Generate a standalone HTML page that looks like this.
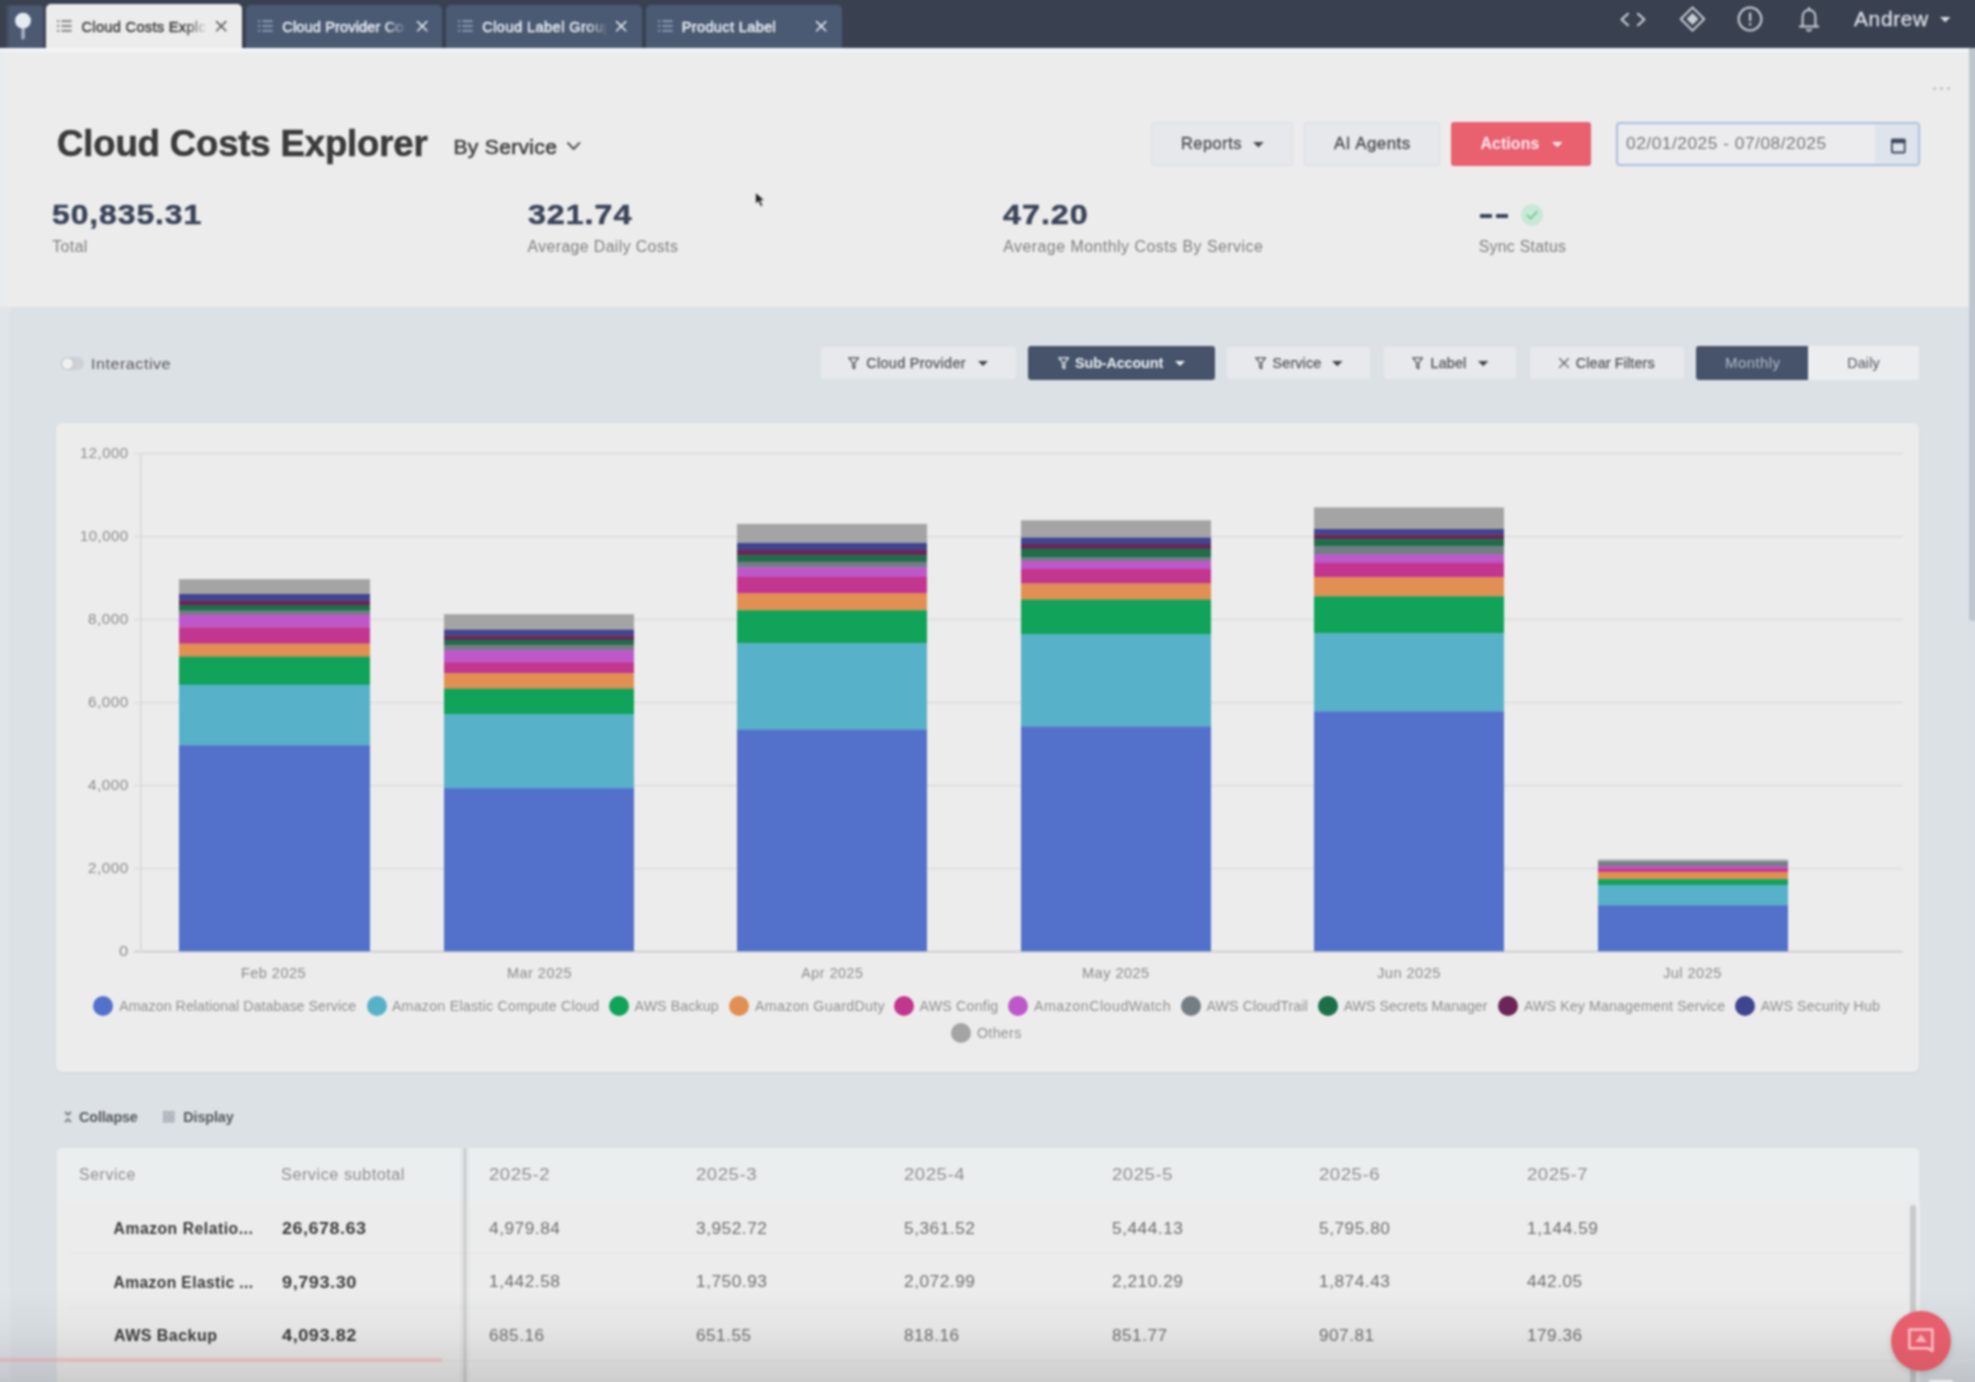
<!DOCTYPE html>
<html><head><meta charset="utf-8"><title>Cloud Costs Explorer</title>
<style>
html,body{margin:0;padding:0;}
body{width:1975px;height:1382px;overflow:hidden;position:relative;background:#dce1e6;font-family:"Liberation Sans",sans-serif;}
.t{position:absolute;white-space:nowrap;line-height:1em;}
.r{position:absolute;}
svg{position:absolute;overflow:visible;}
#bw{position:absolute;left:-20px;top:-20px;width:2015px;height:1422px;filter:blur(1px);}
#in{position:absolute;left:20px;top:20px;width:1975px;height:1382px;}
</style></head><body>
<div id="bw"><div id="in">
<div class="r" style="left:-20.0px;top:-20.0px;width:2015.0px;height:68.0px;background:#394150;"></div>
<div class="r" style="left:6.3px;top:4.8px;width:38.9px;height:43.2px;background:#424d62;border-radius:3px 3px 0 0;"></div>
<div class="r" style="left:9.3px;top:5.6px;width:32.9px;height:42.4px;background:#4c5a71;border-radius:2px 2px 0 0;"></div>
<svg style="left:14.4px;top:12px" width="18" height="28" viewBox="0 0 18 28"><rect x="7.4" y="14" width="3.4" height="13.4" rx="1.4" fill="#aab5c5"/><circle cx="9" cy="8.7" r="7.9" fill="#e6ebf2"/></svg>
<div class="r" style="left:46.0px;top:4.0px;width:196.0px;height:44.0px;background:#ececec;border-radius:5px 5px 0 0;"></div>
<div class="r" style="left:246.0px;top:5.0px;width:196.0px;height:43.0px;background:#4a5a73;border-radius:5px 5px 0 0;"></div>
<div class="r" style="left:446.0px;top:5.0px;width:196.0px;height:43.0px;background:#4a5a73;border-radius:5px 5px 0 0;"></div>
<div class="r" style="left:646.0px;top:5.0px;width:196.0px;height:43.0px;background:#4a5a73;border-radius:5px 5px 0 0;"></div>
<svg style="left:57.4px;top:19.5px" width="15" height="12" viewBox="0 0 15 12"><g fill="#7d7d7d"><rect x="0" y="0.2" width="2.2" height="1.9"/><rect x="4.4" y="0.2" width="10.2" height="1.9"/><rect x="0" y="5" width="2.2" height="1.9"/><rect x="4.4" y="5" width="10.2" height="1.9"/><rect x="0" y="9.8" width="2.2" height="1.9"/><rect x="4.4" y="9.8" width="10.2" height="1.9"/></g></svg>
<div class="r" style="left:81px;top:14px;width:124px;height:26px;overflow:hidden;-webkit-mask-image:linear-gradient(90deg,#000 84%,transparent 102%);mask-image:linear-gradient(90deg,#000 84%,transparent 102%);">
<span class="t" style="left:0.5px;top:6.0px;font-size:14.6px;letter-spacing:0.31px;color:#454545;-webkit-text-stroke:0.55px #454545;">Cloud Costs Explorer</span>
</div>
<svg style="left:216.10000000000002px;top:20.8px" width="10.4" height="10.4" viewBox="0 0 10.4 10.4"><path d="M0.6 0.6 L9.8 9.8 M9.8 0.6 L0.6 9.8" stroke="#5c5c5c" stroke-width="1.6" fill="none" stroke-linecap="round"/></svg>
<svg style="left:257.5px;top:19.5px" width="15" height="12" viewBox="0 0 15 12"><g fill="#8f9db3"><rect x="0" y="0.2" width="2.2" height="1.9"/><rect x="4.4" y="0.2" width="10.2" height="1.9"/><rect x="0" y="5" width="2.2" height="1.9"/><rect x="4.4" y="5" width="10.2" height="1.9"/><rect x="0" y="9.8" width="2.2" height="1.9"/><rect x="4.4" y="9.8" width="10.2" height="1.9"/></g></svg>
<div class="r" style="left:281.5px;top:14px;width:123px;height:26px;overflow:hidden;-webkit-mask-image:linear-gradient(90deg,#000 84%,transparent 102%);mask-image:linear-gradient(90deg,#000 84%,transparent 102%);">
<span class="t" style="left:0.8px;top:6.0px;font-size:14.6px;letter-spacing:0.12px;color:#e4e9f0;-webkit-text-stroke:0.55px #e4e9f0;">Cloud Provider Costs</span>
</div>
<svg style="left:416.8px;top:20.8px" width="10.4" height="10.4" viewBox="0 0 10.4 10.4"><path d="M0.6 0.6 L9.8 9.8 M9.8 0.6 L0.6 9.8" stroke="#e4e9f0" stroke-width="1.6" fill="none" stroke-linecap="round"/></svg>
<svg style="left:457.5px;top:19.5px" width="15" height="12" viewBox="0 0 15 12"><g fill="#8f9db3"><rect x="0" y="0.2" width="2.2" height="1.9"/><rect x="4.4" y="0.2" width="10.2" height="1.9"/><rect x="0" y="5" width="2.2" height="1.9"/><rect x="4.4" y="5" width="10.2" height="1.9"/><rect x="0" y="9.8" width="2.2" height="1.9"/><rect x="4.4" y="9.8" width="10.2" height="1.9"/></g></svg>
<div class="r" style="left:481.5px;top:14px;width:124px;height:26px;overflow:hidden;-webkit-mask-image:linear-gradient(90deg,#000 84%,transparent 102%);mask-image:linear-gradient(90deg,#000 84%,transparent 102%);">
<span class="t" style="left:0.7px;top:6.0px;font-size:14.6px;letter-spacing:0.43px;color:#e4e9f0;-webkit-text-stroke:0.55px #e4e9f0;">Cloud Label Groups</span>
</div>
<svg style="left:615.8px;top:20.8px" width="10.4" height="10.4" viewBox="0 0 10.4 10.4"><path d="M0.6 0.6 L9.8 9.8 M9.8 0.6 L0.6 9.8" stroke="#e4e9f0" stroke-width="1.6" fill="none" stroke-linecap="round"/></svg>
<svg style="left:657.5px;top:19.5px" width="15" height="12" viewBox="0 0 15 12"><g fill="#8f9db3"><rect x="0" y="0.2" width="2.2" height="1.9"/><rect x="4.4" y="0.2" width="10.2" height="1.9"/><rect x="0" y="5" width="2.2" height="1.9"/><rect x="4.4" y="5" width="10.2" height="1.9"/><rect x="0" y="9.8" width="2.2" height="1.9"/><rect x="4.4" y="9.8" width="10.2" height="1.9"/></g></svg>
<span class="t" style="left:681.7px;top:20.0px;font-size:14.6px;letter-spacing:0.34px;color:#e4e9f0;-webkit-text-stroke:0.55px #e4e9f0;">Product Label</span>
<svg style="left:816.3px;top:20.8px" width="10.4" height="10.4" viewBox="0 0 10.4 10.4"><path d="M0.6 0.6 L9.8 9.8 M9.8 0.6 L0.6 9.8" stroke="#e4e9f0" stroke-width="1.6" fill="none" stroke-linecap="round"/></svg>
<svg style="left:1620px;top:13px" width="26" height="13" viewBox="0 0 26 13"><path d="M8 0.8 L1.6 6.5 L8 12.2 M18 0.8 L24.4 6.5 L18 12.2" stroke="#c9ced7" stroke-width="2.2" fill="none" stroke-linecap="round" stroke-linejoin="round"/></svg>
<svg style="left:1678.5px;top:6px" width="27" height="26" viewBox="0 0 27 26"><path d="M13.5 1.4 L25.2 13 L13.5 24.6 L1.8 13 Z" stroke="#c9ced7" stroke-width="2" fill="none" stroke-linejoin="round"/><path d="M13.5 7 L19.5 13 L13.5 19 L7.5 13 Z" fill="#c9ced7"/></svg>
<svg style="left:1737px;top:6px" width="26" height="26" viewBox="0 0 26 26"><circle cx="13" cy="13" r="11.4" stroke="#c9ced7" stroke-width="2" fill="none"/><rect x="12" y="6.6" width="2.2" height="8.4" fill="#c9ced7"/><rect x="12" y="17" width="2.2" height="2.4" fill="#c9ced7"/></svg>
<svg style="left:1798.5px;top:6.5px" width="20" height="25" viewBox="0 0 20 25"><path d="M10 1 V3 M3.6 19.2 V10.4 C3.6 5.6 6.4 3 10 3 C13.6 3 16.4 5.6 16.4 10.4 V19.2 M0.8 19.6 H19.2 M8 22.6 C8.6 24 11.4 24 12 22.6" stroke="#c9ced7" stroke-width="2" fill="none" stroke-linecap="round" stroke-linejoin="round"/></svg>
<span class="t" style="left:1854.0px;top:10.0px;font-size:19.6px;letter-spacing:0.59px;color:#dadee6;transform-origin:0 50%;transform:scaleX(1.0691);-webkit-text-stroke:0.3px #dadee6;">Andrew</span>
<svg style="left:1940px;top:17.4px" width="10.400000000000091" height="5.2000000000000455" viewBox="0 0 10 5"><path d="M0 0 H10 L5 5 Z" fill="#dadee6"/></svg>
<div class="r" style="left:-20.0px;top:48.0px;width:2015.0px;height:258.5px;background:#ececec;"></div>
<div class="r" style="left:-20.0px;top:306.5px;width:2015.0px;height:1095.5px;background:#dce1e6;"></div>
<div class="r" style="left:-20px;top:48px;width:2015px;height:6px;background:linear-gradient(180deg,rgba(246,249,252,.9),rgba(246,249,252,0))"></div>
<div class="r" style="left:-20.0px;top:52.0px;width:25.5px;height:254.5px;background:#e9ecee;"></div>
<div class="r" style="left:-20.0px;top:306.5px;width:30.0px;height:1095.5px;background:#e0e5ea;"></div>
<span class="t" style="left:57.0px;top:125.5px;font-size:36.5px;letter-spacing:-0.13px;color:#3b3b3b;font-weight:bold;-webkit-text-stroke:0.6px #3b3b3b;">Cloud Costs Explorer</span>
<span class="t" style="left:453.5px;top:136.2px;font-size:21px;letter-spacing:0.33px;color:#444;-webkit-text-stroke:0.65px #444;">By Service</span>
<svg style="left:566.8px;top:141.6px" width="13.4" height="8.4" viewBox="0 0 13.4 8.4"><path d="M1 1 L6.7 7 L12.4 1" stroke="#555" stroke-width="2" fill="none" stroke-linecap="round" stroke-linejoin="round"/></svg>
<div class="r" style="left:1932.5px;top:86.5px;width:3.6px;height:3.0px;background:#bdbdbd;border-radius:2px;"></div>
<div class="r" style="left:1939.5px;top:86.5px;width:3.6px;height:3.0px;background:#bdbdbd;border-radius:2px;"></div>
<div class="r" style="left:1946.5px;top:86.5px;width:3.6px;height:3.0px;background:#bdbdbd;border-radius:2px;"></div>
<span class="t" style="left:52.3px;top:201.2px;font-size:27.8px;letter-spacing:0.83px;color:#3a4459;font-weight:bold;transform-origin:0 50%;transform:scaleX(1.1449);-webkit-text-stroke:0.5px #3a4459;">50,835.31</span>
<span class="t" style="left:52.3px;top:239.2px;font-size:15.8px;letter-spacing:0.43px;color:#7d7d7d;">Total</span>
<span class="t" style="left:528.2px;top:201.2px;font-size:27.8px;letter-spacing:0.83px;color:#3a4459;font-weight:bold;transform-origin:0 50%;transform:scaleX(1.1584);-webkit-text-stroke:0.5px #3a4459;">321.74</span>
<span class="t" style="left:527.6px;top:239.2px;font-size:15.8px;letter-spacing:0.41px;color:#7d7d7d;">Average Daily Costs</span>
<span class="t" style="left:1003.4px;top:201.2px;font-size:27.8px;letter-spacing:0.83px;color:#3a4459;font-weight:bold;transform-origin:0 50%;transform:scaleX(1.1635);-webkit-text-stroke:0.5px #3a4459;">47.20</span>
<span class="t" style="left:1003.2px;top:239.2px;font-size:15.8px;letter-spacing:0.54px;color:#7d7d7d;">Average Monthly Costs By Service</span>
<div class="r" style="left:1479.5px;top:213.6px;width:12.5px;height:4.0px;background:#3a4459;"></div>
<div class="r" style="left:1496.0px;top:213.6px;width:12.4px;height:4.0px;background:#3a4459;"></div>
<svg style="left:1520.5px;top:203.5px" width="22" height="22" viewBox="0 0 22 22"><circle cx="11" cy="11" r="11" fill="#c9e8d6"/><path d="M6.4 11.4 L9.8 14.6 L15.8 7.6" stroke="#79c79c" stroke-width="1.8" fill="none" stroke-linecap="round" stroke-linejoin="round"/></svg>
<span class="t" style="left:1478.8px;top:239.2px;font-size:15.8px;letter-spacing:0.28px;color:#7d7d7d;">Sync Status</span>
<div class="r" style="left:1151.0px;top:122.0px;width:142.3px;height:44.0px;background:#e6e8eb;border:1px solid #dcdfe3;box-sizing:border-box;border-radius:3px;"></div>
<span class="t" style="left:1181.0px;top:135.6px;font-size:15.8px;letter-spacing:0.47px;color:#4e4e4e;transform-origin:0 50%;transform:scaleX(1.0394);-webkit-text-stroke:0.35px #4e4e4e;">Reports</span>
<svg style="left:1252.8px;top:142.2px" width="10.799999999999955" height="5.399999999999977" viewBox="0 0 10 5"><path d="M0 0 H10 L5 5 Z" fill="#4a4a4a"/></svg>
<div class="r" style="left:1303.7px;top:122.0px;width:136.3px;height:44.0px;background:#e6e8eb;border:1px solid #dcdfe3;box-sizing:border-box;border-radius:3px;"></div>
<span class="t" style="left:1333.5px;top:135.6px;font-size:15.8px;letter-spacing:0.47px;color:#4e4e4e;transform-origin:0 50%;transform:scaleX(1.0675);-webkit-text-stroke:0.35px #4e4e4e;">AI Agents</span>
<div class="r" style="left:1450.6px;top:122.0px;width:140.4px;height:44.0px;background:#e9606f;border-radius:3px;"></div>
<span class="t" style="left:1480.4px;top:135.6px;font-size:15.8px;letter-spacing:0.16px;color:#fbecee;font-weight:bold;">Actions</span>
<svg style="left:1551.8px;top:142.2px" width="10.600000000000136" height="5.300000000000068" viewBox="0 0 10 5"><path d="M0 0 H10 L5 5 Z" fill="#fbecee"/></svg>
<div class="r" style="left:1616.0px;top:121.5px;width:304.0px;height:44.0px;background:#ececee;border:2px solid #a9c0df;box-sizing:border-box;border-radius:4px;"></div>
<div class="r" style="left:1875.0px;top:123.5px;width:43.0px;height:40.0px;background:#dfe4ec;border-radius:0 2px 2px 0;"></div>
<span class="t" style="left:1625.6px;top:136.2px;font-size:15.6px;letter-spacing:0.47px;color:#767676;transform-origin:0 50%;transform:scaleX(1.1101);">02/01/2025 - 07/08/2025</span>
<svg style="left:1891.2px;top:138px" width="14.6" height="15.4" viewBox="0 0 14.6 15.4"><rect x="0.9" y="1.6" width="12.8" height="12.9" rx="1" fill="none" stroke="#3e4a5d" stroke-width="1.8"/><rect x="0" y="0.7" width="14.6" height="4.6" rx="1" fill="#3e4a5d"/></svg>
<svg style="left:755px;top:192px" width="11" height="16" viewBox="0 0 11 16"><path d="M0.5 0.5 L0.5 12 L3.4 9.4 L5.6 14.6 L7.8 13.6 L5.6 8.6 L9.6 8.4 Z" fill="#222" stroke="#eee" stroke-width="0.7"/></svg>
<div class="r" style="left:61.3px;top:357.4px;width:22.7px;height:12.4px;background:#cdd1d6;border-radius:7px;"></div>
<div class="r" style="left:62.4px;top:358.4px;width:10.4px;height:10.4px;border-radius:50%;background:#eef0f2;box-shadow:0 0 1.5px rgba(0,0,0,.3)"></div>
<span class="t" style="left:90.8px;top:356.0px;font-size:15.2px;letter-spacing:0.46px;color:#585858;transform-origin:0 50%;transform:scaleX(1.0653);">Interactive</span>
<div class="r" style="left:819.8px;top:346.3px;width:197.5px;height:33.5px;background:#e7e9ec;border:1px solid #dde0e4;box-sizing:border-box;border-radius:3px;"></div>
<svg style="left:848.4px;top:357.2px" width="11.4" height="12.6" viewBox="0 0 11.4 12.6"><path d="M0.8 0.8 H10.6 L6.7 5.6 V11.6 L4.7 10.4 V5.6 Z" stroke="#50545a" stroke-width="1.3" fill="none" stroke-linejoin="round"/></svg>
<span class="t" style="left:866.3px;top:355.8px;font-size:14.4px;letter-spacing:0.31px;color:#50545a;-webkit-text-stroke:0.25px #50545a;">Cloud Provider</span>
<svg style="left:977.8px;top:361px" width="10.0" height="5.0" viewBox="0 0 10 5"><path d="M0 0 H10 L5 5 Z" fill="#444"/></svg>
<div class="r" style="left:1028.0px;top:346.3px;width:187.0px;height:33.7px;background:#46536b;border-radius:3px;"></div>
<svg style="left:1057.6px;top:357.2px" width="11.4" height="12.6" viewBox="0 0 11.4 12.6"><path d="M0.8 0.8 H10.6 L6.7 5.6 V11.6 L4.7 10.4 V5.6 Z" stroke="#eef1f5" stroke-width="1.3" fill="none" stroke-linejoin="round"/></svg>
<span class="t" style="left:1075.0px;top:355.8px;font-size:14.4px;letter-spacing:-0.13px;color:#eef1f5;font-weight:bold;">Sub-Account</span>
<svg style="left:1175.4px;top:361px" width="10.0" height="5.0" viewBox="0 0 10 5"><path d="M0 0 H10 L5 5 Z" fill="#eef1f5"/></svg>
<div class="r" style="left:1225.5px;top:346.3px;width:145.9px;height:33.5px;background:#e7e9ec;border:1px solid #dde0e4;box-sizing:border-box;border-radius:3px;"></div>
<svg style="left:1255px;top:357.2px" width="11.4" height="12.6" viewBox="0 0 11.4 12.6"><path d="M0.8 0.8 H10.6 L6.7 5.6 V11.6 L4.7 10.4 V5.6 Z" stroke="#50545a" stroke-width="1.3" fill="none" stroke-linejoin="round"/></svg>
<span class="t" style="left:1272.6px;top:355.8px;font-size:14.4px;letter-spacing:0.11px;color:#50545a;-webkit-text-stroke:0.25px #50545a;">Service</span>
<svg style="left:1332.4px;top:361px" width="10.599999999999909" height="5.2999999999999545" viewBox="0 0 10 5"><path d="M0 0 H10 L5 5 Z" fill="#444"/></svg>
<div class="r" style="left:1382.8px;top:346.3px;width:134.6px;height:33.5px;background:#e7e9ec;border:1px solid #dde0e4;box-sizing:border-box;border-radius:3px;"></div>
<svg style="left:1412.2px;top:357.2px" width="11.4" height="12.6" viewBox="0 0 11.4 12.6"><path d="M0.8 0.8 H10.6 L6.7 5.6 V11.6 L4.7 10.4 V5.6 Z" stroke="#50545a" stroke-width="1.3" fill="none" stroke-linejoin="round"/></svg>
<span class="t" style="left:1430.5px;top:355.8px;font-size:14.4px;letter-spacing:0.15px;color:#50545a;-webkit-text-stroke:0.25px #50545a;">Label</span>
<svg style="left:1478px;top:361px" width="10.400000000000091" height="5.2000000000000455" viewBox="0 0 10 5"><path d="M0 0 H10 L5 5 Z" fill="#444"/></svg>
<div class="r" style="left:1528.7px;top:346.3px;width:155.9px;height:33.5px;background:#e7e9ec;border:1px solid #dde0e4;box-sizing:border-box;border-radius:3px;"></div>
<svg style="left:1559.3px;top:358.4px" width="10.0" height="10.0" viewBox="0 0 10.0 10.0"><path d="M0.6 0.6 L9.4 9.4 M9.4 0.6 L0.6 9.4" stroke="#50545a" stroke-width="1.3" fill="none" stroke-linecap="round"/></svg>
<span class="t" style="left:1575.8px;top:355.8px;font-size:14.4px;letter-spacing:0.11px;color:#50545a;-webkit-text-stroke:0.25px #50545a;">Clear Filters</span>
<div class="r" style="left:1695.9px;top:346.3px;width:112.4px;height:33.7px;background:#46536b;border-radius:3px 0 0 3px;"></div>
<span class="t" style="left:1724.7px;top:356.2px;font-size:14.4px;letter-spacing:0.43px;color:#b3bcc9;transform-origin:0 50%;transform:scaleX(1.0390);">Monthly</span>
<div class="r" style="left:1808.3px;top:346.3px;width:110.4px;height:33.7px;background:#ebedef;border-radius:0 3px 3px 0;"></div>
<span class="t" style="left:1847.2px;top:356.2px;font-size:14.4px;letter-spacing:0.13px;color:#50545a;">Daily</span>
<div class="r" style="left:56.2px;top:423.0px;width:1863.1px;height:648.6px;background:#ececec;border-radius:6px;box-shadow:0 1px 3px rgba(0,0,0,.06);"></div>
<svg style="left:0;top:0" width="1975" height="1100" viewBox="0 0 1975 1100"><rect x="134" y="452.8" width="1769" height="1.6" fill="#dddddd"/><rect x="134" y="535.8000000000001" width="1769" height="1.6" fill="#dddddd"/><rect x="134" y="618.8000000000001" width="1769" height="1.6" fill="#dddddd"/><rect x="134" y="701.8000000000001" width="1769" height="1.6" fill="#dddddd"/><rect x="134" y="784.8000000000001" width="1769" height="1.6" fill="#dddddd"/><rect x="134" y="867.8000000000001" width="1769" height="1.6" fill="#dddddd"/><rect x="134" y="950.8000000000001" width="1769" height="1.6" fill="#c9c9c9"/><rect x="140" y="453" width="1.8" height="499" fill="#dadada"/><rect x="179" y="579.2" width="191" height="15.1" fill="#a4a4a4"/><rect x="179" y="594" width="191" height="6.8" fill="#3f4591"/><rect x="179" y="600.5" width="191" height="4.8" fill="#6b2556"/><rect x="179" y="605" width="191" height="5.9" fill="#1d6f49"/><rect x="179" y="610.6" width="191" height="4.4" fill="#737d84"/><rect x="179" y="614.7" width="191" height="12.9" fill="#be58ca"/><rect x="179" y="627.3" width="191" height="16.6" fill="#c3368f"/><rect x="179" y="643.6" width="191" height="13.3" fill="#e18f52"/><rect x="179" y="656.6" width="191" height="28.4" fill="#10a359"/><rect x="179" y="684.7" width="191" height="60.8" fill="#57b2c9"/><rect x="179" y="745.2" width="191" height="206.1" fill="#5371cb"/><rect x="444" y="614.2" width="190" height="15.8" fill="#a4a4a4"/><rect x="444" y="629.7" width="190" height="6.0" fill="#3f4591"/><rect x="444" y="635.4" width="190" height="4.7" fill="#6b2556"/><rect x="444" y="639.8" width="190" height="5.4" fill="#1d6f49"/><rect x="444" y="644.9" width="190" height="5.3" fill="#737d84"/><rect x="444" y="649.9" width="190" height="12.6" fill="#be58ca"/><rect x="444" y="662.2" width="190" height="11.2" fill="#c3368f"/><rect x="444" y="673.1" width="190" height="15.8" fill="#e18f52"/><rect x="444" y="688.6" width="190" height="26.0" fill="#10a359"/><rect x="444" y="714.3" width="190" height="74.1" fill="#57b2c9"/><rect x="444" y="788.1" width="190" height="163.2" fill="#5371cb"/><rect x="737" y="523.9" width="190" height="19.4" fill="#a4a4a4"/><rect x="737" y="543" width="190" height="6.9" fill="#3f4591"/><rect x="737" y="549.6" width="190" height="5.8" fill="#6b2556"/><rect x="737" y="555.1" width="190" height="6.9" fill="#1d6f49"/><rect x="737" y="561.7" width="190" height="5.9" fill="#737d84"/><rect x="737" y="567.3" width="190" height="9.8" fill="#be58ca"/><rect x="737" y="576.8" width="190" height="16.8" fill="#c3368f"/><rect x="737" y="593.3" width="190" height="17.3" fill="#e18f52"/><rect x="737" y="610.3" width="190" height="33.3" fill="#10a359"/><rect x="737" y="643.3" width="190" height="86.6" fill="#57b2c9"/><rect x="737" y="729.6" width="190" height="221.7" fill="#5371cb"/><rect x="1021" y="520.3" width="190" height="17.6" fill="#a4a4a4"/><rect x="1021" y="537.6" width="190" height="6.7" fill="#3f4591"/><rect x="1021" y="544" width="190" height="5.1" fill="#6b2556"/><rect x="1021" y="548.8" width="190" height="8.5" fill="#1d6f49"/><rect x="1021" y="557" width="190" height="4.2" fill="#737d84"/><rect x="1021" y="560.9" width="190" height="8.3" fill="#be58ca"/><rect x="1021" y="568.9" width="190" height="14.9" fill="#c3368f"/><rect x="1021" y="583.5" width="190" height="16.4" fill="#e18f52"/><rect x="1021" y="599.6" width="190" height="35.0" fill="#10a359"/><rect x="1021" y="634.3" width="190" height="92.4" fill="#57b2c9"/><rect x="1021" y="726.4" width="190" height="224.9" fill="#5371cb"/><rect x="1314" y="507.4" width="190" height="21.9" fill="#a4a4a4"/><rect x="1314" y="529" width="190" height="5.6" fill="#3f4591"/><rect x="1314" y="534.3" width="190" height="5.1" fill="#6b2556"/><rect x="1314" y="539.1" width="190" height="7.6" fill="#1d6f49"/><rect x="1314" y="546.4" width="190" height="8.5" fill="#737d84"/><rect x="1314" y="554.6" width="190" height="8.6" fill="#be58ca"/><rect x="1314" y="562.9" width="190" height="14.6" fill="#c3368f"/><rect x="1314" y="577.2" width="190" height="19.4" fill="#e18f52"/><rect x="1314" y="596.3" width="190" height="37.2" fill="#10a359"/><rect x="1314" y="633.2" width="190" height="78.5" fill="#57b2c9"/><rect x="1314" y="711.4" width="190" height="239.9" fill="#5371cb"/><rect x="1598" y="859.6" width="190" height="2.3" fill="#a4a4a4"/><rect x="1598" y="861.6" width="190" height="4.7" fill="#737d84"/><rect x="1598" y="866" width="190" height="2.9" fill="#be58ca"/><rect x="1598" y="868.6" width="190" height="3.5" fill="#c3368f"/><rect x="1598" y="871.8" width="190" height="7.7" fill="#e18f52"/><rect x="1598" y="879.2" width="190" height="6.1" fill="#10a359"/><rect x="1598" y="885" width="190" height="20.5" fill="#57b2c9"/><rect x="1598" y="905.2" width="190" height="46.1" fill="#5371cb"/></svg>
<span class="t" style="left:80.4px;top:446.4px;font-size:14.2px;letter-spacing:0.43px;color:#8b8b8b;transform-origin:0 50%;transform:scaleX(1.0531);">12,000</span>
<span class="t" style="left:80.4px;top:529.4px;font-size:14.2px;letter-spacing:0.43px;color:#8b8b8b;transform-origin:0 50%;transform:scaleX(1.0531);">10,000</span>
<span class="t" style="left:88.2px;top:612.4px;font-size:14.2px;letter-spacing:0.43px;color:#8b8b8b;transform-origin:0 50%;transform:scaleX(1.0788);">8,000</span>
<span class="t" style="left:88.2px;top:695.4px;font-size:14.2px;letter-spacing:0.43px;color:#8b8b8b;transform-origin:0 50%;transform:scaleX(1.0788);">6,000</span>
<span class="t" style="left:88.2px;top:778.4px;font-size:14.2px;letter-spacing:0.43px;color:#8b8b8b;transform-origin:0 50%;transform:scaleX(1.0788);">4,000</span>
<span class="t" style="left:88.2px;top:861.4px;font-size:14.2px;letter-spacing:0.43px;color:#8b8b8b;transform-origin:0 50%;transform:scaleX(1.0788);">2,000</span>
<span class="t" style="left:119.2px;top:944.4px;font-size:14.2px;letter-spacing:0.43px;color:#8b8b8b;transform-origin:0 50%;transform:scaleX(1.1591);">0</span>
<span class="t" style="left:241.4px;top:965.6px;font-size:14.2px;letter-spacing:0.43px;color:#8b8b8b;transform-origin:0 50%;transform:scaleX(1.0254);">Feb 2025</span>
<span class="t" style="left:506.5px;top:965.6px;font-size:14.2px;letter-spacing:0.43px;color:#8b8b8b;transform-origin:0 50%;transform:scaleX(1.0257);">Mar 2025</span>
<span class="t" style="left:801.3px;top:965.6px;font-size:14.2px;letter-spacing:0.58px;color:#8b8b8b;">Apr 2025</span>
<span class="t" style="left:1081.5px;top:965.6px;font-size:14.2px;letter-spacing:0.43px;color:#8b8b8b;transform-origin:0 50%;transform:scaleX(1.0282);">May 2025</span>
<span class="t" style="left:1376.9px;top:965.6px;font-size:14.2px;letter-spacing:0.43px;color:#8b8b8b;transform-origin:0 50%;transform:scaleX(1.0338);">Jun 2025</span>
<span class="t" style="left:1663.3px;top:965.6px;font-size:14.2px;letter-spacing:0.43px;color:#8b8b8b;transform-origin:0 50%;transform:scaleX(1.0303);">Jul 2025</span>
<div class="r" style="left:93.3px;top:995.6px;width:20px;height:20px;border-radius:50%;background:#5371cb"></div>
<span class="t" style="left:119.2px;top:998.8px;font-size:14.2px;letter-spacing:0.06px;color:#8f8f8f;">Amazon Relational Database Service</span>
<div class="r" style="left:366.7px;top:995.6px;width:20px;height:20px;border-radius:50%;background:#57b2c9"></div>
<span class="t" style="left:391.9px;top:998.8px;font-size:14.2px;letter-spacing:0.26px;color:#8f8f8f;">Amazon Elastic Compute Cloud</span>
<div class="r" style="left:609.2px;top:995.6px;width:20px;height:20px;border-radius:50%;background:#10a359"></div>
<span class="t" style="left:634.6px;top:998.8px;font-size:14.2px;letter-spacing:0.10px;color:#8f8f8f;">AWS Backup</span>
<div class="r" style="left:729px;top:995.6px;width:20px;height:20px;border-radius:50%;background:#e18f52"></div>
<span class="t" style="left:755.0px;top:998.8px;font-size:14.2px;letter-spacing:0.34px;color:#8f8f8f;">Amazon GuardDuty</span>
<div class="r" style="left:894.4px;top:995.6px;width:20px;height:20px;border-radius:50%;background:#c3368f"></div>
<span class="t" style="left:919.5px;top:998.8px;font-size:14.2px;letter-spacing:0.21px;color:#8f8f8f;">AWS Config</span>
<div class="r" style="left:1008.3px;top:995.6px;width:20px;height:20px;border-radius:50%;background:#be58ca"></div>
<span class="t" style="left:1034.0px;top:998.8px;font-size:14.2px;letter-spacing:0.52px;color:#8f8f8f;">AmazonCloudWatch</span>
<div class="r" style="left:1180.6px;top:995.6px;width:20px;height:20px;border-radius:50%;background:#737d84"></div>
<span class="t" style="left:1206.6px;top:998.8px;font-size:14.2px;letter-spacing:0.09px;color:#8f8f8f;">AWS CloudTrail</span>
<div class="r" style="left:1318px;top:995.6px;width:20px;height:20px;border-radius:50%;background:#1d6f49"></div>
<span class="t" style="left:1343.7px;top:998.8px;font-size:14.2px;letter-spacing:0.00px;color:#8f8f8f;">AWS Secrets Manager</span>
<div class="r" style="left:1498px;top:995.6px;width:20px;height:20px;border-radius:50%;background:#6b2556"></div>
<span class="t" style="left:1524.0px;top:998.8px;font-size:14.2px;letter-spacing:0.12px;color:#8f8f8f;">AWS Key Management Service</span>
<div class="r" style="left:1735.3px;top:995.6px;width:20px;height:20px;border-radius:50%;background:#3f4591"></div>
<span class="t" style="left:1760.8px;top:998.8px;font-size:14.2px;letter-spacing:0.14px;color:#8f8f8f;">AWS Security Hub</span>
<div class="r" style="left:950.8px;top:1022.5999999999999px;width:20px;height:20px;border-radius:50%;background:#a4a4a4"></div>
<span class="t" style="left:977.0px;top:1025.8px;font-size:14.2px;letter-spacing:0.33px;color:#8f8f8f;">Others</span>
<svg style="left:63.6px;top:1110.6px" width="8" height="12" viewBox="0 0 8 12"><path d="M1 0.8 L4 3.8 L7 0.8 M1 11.2 L4 8.2 L7 11.2" stroke="#70757c" stroke-width="1.7" fill="none" stroke-linejoin="round"/></svg>
<span class="t" style="left:79.1px;top:1109.7px;font-size:14.4px;letter-spacing:-0.18px;color:#55585e;font-weight:bold;">Collapse</span>
<svg style="left:163.2px;top:1110.8px" width="11.6" height="11.6" viewBox="0 0 12 12"><g fill="#c9ced4" stroke="#9aa0a8" stroke-width="1.2"><rect x="0.8" y="0.8" width="4.2" height="4.2"/><rect x="7" y="0.8" width="4.2" height="4.2"/><rect x="0.8" y="7" width="4.2" height="4.2"/><rect x="7" y="7" width="4.2" height="4.2"/></g></svg>
<span class="t" style="left:183.3px;top:1109.7px;font-size:14.4px;letter-spacing:-0.14px;color:#55585e;font-weight:bold;">Display</span>
<div class="r" style="left:56.6px;top:1148.0px;width:1862.4px;height:254.0px;background:#ebeeef;border-radius:5px 5px 0 0;"></div>
<div class="r" style="left:56.6px;top:1201.0px;width:1862.4px;height:201.0px;background:#ececec;"></div>
<div class="r" style="left:70.0px;top:1252.6px;width:1835.0px;height:1.2px;background:#e3e3e3;"></div>
<div class="r" style="left:70.0px;top:1306.6px;width:1835.0px;height:1.2px;background:#e3e3e3;"></div>
<div class="r" style="left:70.0px;top:1360.4px;width:1835.0px;height:1.2px;background:#e3e3e3;"></div>
<div class="r" style="left:459px;top:1148px;width:11px;height:254px;background:linear-gradient(90deg,rgba(0,0,0,0),rgba(60,70,80,.09) 45%,rgba(60,70,80,.09) 60%,rgba(0,0,0,0))"></div>
<div class="r" style="left:463.6px;top:1148.0px;width:2.2px;height:254.0px;background:#c6c9cc;"></div>
<span class="t" style="left:79.0px;top:1166.9px;font-size:15.8px;letter-spacing:0.60px;color:#8d8d8d;">Service</span>
<span class="t" style="left:281.2px;top:1166.9px;font-size:15.8px;letter-spacing:0.47px;color:#8d8d8d;transform-origin:0 50%;transform:scaleX(1.0338);">Service subtotal</span>
<span class="t" style="left:488.8px;top:1167.0px;font-size:15.8px;letter-spacing:0.47px;color:#8d8d8d;transform-origin:0 50%;transform:scaleX(1.1738);">2025-2</span>
<span class="t" style="left:696.4px;top:1167.0px;font-size:15.8px;letter-spacing:0.47px;color:#8d8d8d;transform-origin:0 50%;transform:scaleX(1.1738);">2025-3</span>
<span class="t" style="left:904.0px;top:1167.0px;font-size:15.8px;letter-spacing:0.47px;color:#8d8d8d;transform-origin:0 50%;transform:scaleX(1.1738);">2025-4</span>
<span class="t" style="left:1111.5px;top:1167.0px;font-size:15.8px;letter-spacing:0.47px;color:#8d8d8d;transform-origin:0 50%;transform:scaleX(1.1738);">2025-5</span>
<span class="t" style="left:1319.3px;top:1167.0px;font-size:15.8px;letter-spacing:0.47px;color:#8d8d8d;transform-origin:0 50%;transform:scaleX(1.1738);">2025-6</span>
<span class="t" style="left:1526.7px;top:1167.0px;font-size:15.8px;letter-spacing:0.47px;color:#8d8d8d;transform-origin:0 50%;transform:scaleX(1.1738);">2025-7</span>
<span class="t" style="left:113.6px;top:1220.8px;font-size:15.6px;letter-spacing:0.58px;color:#383838;font-weight:bold;">Amazon Relatio...</span>
<span class="t" style="left:281.9px;top:1220.8px;font-size:15.6px;letter-spacing:0.47px;color:#383838;font-weight:bold;transform-origin:0 50%;transform:scaleX(1.1490);">26,678.63</span>
<span class="t" style="left:488.8px;top:1220.6px;font-size:15.8px;letter-spacing:0.47px;color:#6e6e6e;transform-origin:0 50%;transform:scaleX(1.0945);">4,979.84</span>
<span class="t" style="left:696.4px;top:1220.6px;font-size:15.8px;letter-spacing:0.47px;color:#6e6e6e;transform-origin:0 50%;transform:scaleX(1.0945);">3,952.72</span>
<span class="t" style="left:904.0px;top:1220.6px;font-size:15.8px;letter-spacing:0.47px;color:#6e6e6e;transform-origin:0 50%;transform:scaleX(1.0945);">5,361.52</span>
<span class="t" style="left:1111.5px;top:1220.6px;font-size:15.8px;letter-spacing:0.47px;color:#6e6e6e;transform-origin:0 50%;transform:scaleX(1.0945);">5,444.13</span>
<span class="t" style="left:1319.3px;top:1220.6px;font-size:15.8px;letter-spacing:0.47px;color:#6e6e6e;transform-origin:0 50%;transform:scaleX(1.0945);">5,795.80</span>
<span class="t" style="left:1526.7px;top:1220.6px;font-size:15.8px;letter-spacing:0.47px;color:#6e6e6e;transform-origin:0 50%;transform:scaleX(1.0945);">1,144.59</span>
<span class="t" style="left:113.6px;top:1274.6px;font-size:15.6px;letter-spacing:0.40px;color:#383838;font-weight:bold;">Amazon Elastic ...</span>
<span class="t" style="left:281.9px;top:1274.6px;font-size:15.6px;letter-spacing:0.47px;color:#383838;font-weight:bold;transform-origin:0 50%;transform:scaleX(1.1630);">9,793.30</span>
<span class="t" style="left:488.8px;top:1274.4px;font-size:15.8px;letter-spacing:0.47px;color:#6e6e6e;transform-origin:0 50%;transform:scaleX(1.0945);">1,442.58</span>
<span class="t" style="left:696.4px;top:1274.4px;font-size:15.8px;letter-spacing:0.47px;color:#6e6e6e;transform-origin:0 50%;transform:scaleX(1.0945);">1,750.93</span>
<span class="t" style="left:904.0px;top:1274.4px;font-size:15.8px;letter-spacing:0.47px;color:#6e6e6e;transform-origin:0 50%;transform:scaleX(1.0945);">2,072.99</span>
<span class="t" style="left:1111.5px;top:1274.4px;font-size:15.8px;letter-spacing:0.47px;color:#6e6e6e;transform-origin:0 50%;transform:scaleX(1.0945);">2,210.29</span>
<span class="t" style="left:1319.3px;top:1274.4px;font-size:15.8px;letter-spacing:0.47px;color:#6e6e6e;transform-origin:0 50%;transform:scaleX(1.0945);">1,874.43</span>
<span class="t" style="left:1526.7px;top:1274.4px;font-size:15.8px;letter-spacing:0.47px;color:#6e6e6e;transform-origin:0 50%;transform:scaleX(1.0859);">442.05</span>
<span class="t" style="left:113.6px;top:1328.4px;font-size:15.6px;letter-spacing:0.47px;color:#383838;font-weight:bold;transform-origin:0 50%;transform:scaleX(1.0252);">AWS Backup</span>
<span class="t" style="left:281.9px;top:1328.4px;font-size:15.6px;letter-spacing:0.47px;color:#383838;font-weight:bold;transform-origin:0 50%;transform:scaleX(1.1630);">4,093.82</span>
<span class="t" style="left:488.8px;top:1328.2px;font-size:15.8px;letter-spacing:0.47px;color:#6e6e6e;transform-origin:0 50%;transform:scaleX(1.0859);">685.16</span>
<span class="t" style="left:696.4px;top:1328.2px;font-size:15.8px;letter-spacing:0.47px;color:#6e6e6e;transform-origin:0 50%;transform:scaleX(1.0859);">651.55</span>
<span class="t" style="left:904.0px;top:1328.2px;font-size:15.8px;letter-spacing:0.47px;color:#6e6e6e;transform-origin:0 50%;transform:scaleX(1.0859);">818.16</span>
<span class="t" style="left:1111.5px;top:1328.2px;font-size:15.8px;letter-spacing:0.47px;color:#6e6e6e;transform-origin:0 50%;transform:scaleX(1.0859);">851.77</span>
<span class="t" style="left:1319.3px;top:1328.2px;font-size:15.8px;letter-spacing:0.47px;color:#6e6e6e;transform-origin:0 50%;transform:scaleX(1.0859);">907.81</span>
<span class="t" style="left:1526.7px;top:1328.2px;font-size:15.8px;letter-spacing:0.47px;color:#6e6e6e;transform-origin:0 50%;transform:scaleX(1.0859);">179.36</span>
<span class="t" style="left:113.6px;top:1383.4px;font-size:15.6px;letter-spacing:0.28px;color:#383838;font-weight:bold;">Amazon GuardD...</span>
<span class="t" style="left:281.9px;top:1383.4px;font-size:15.6px;letter-spacing:0.47px;color:#383838;font-weight:bold;transform-origin:0 50%;transform:scaleX(1.1630);">2,352.18</span>
<span class="t" style="left:488.8px;top:1383.2px;font-size:15.8px;letter-spacing:0.47px;color:#6e6e6e;transform-origin:0 50%;transform:scaleX(1.0859);">348.22</span>
<span class="t" style="left:696.4px;top:1383.2px;font-size:15.8px;letter-spacing:0.47px;color:#6e6e6e;transform-origin:0 50%;transform:scaleX(1.0859);">402.17</span>
<span class="t" style="left:904.0px;top:1383.2px;font-size:15.8px;letter-spacing:0.47px;color:#6e6e6e;transform-origin:0 50%;transform:scaleX(1.0859);">421.90</span>
<span class="t" style="left:1111.5px;top:1383.2px;font-size:15.8px;letter-spacing:0.47px;color:#6e6e6e;transform-origin:0 50%;transform:scaleX(1.0859);">398.54</span>
<span class="t" style="left:1319.3px;top:1383.2px;font-size:15.8px;letter-spacing:0.47px;color:#6e6e6e;transform-origin:0 50%;transform:scaleX(1.0859);">466.03</span>
<span class="t" style="left:1526.7px;top:1383.2px;font-size:15.8px;letter-spacing:0.47px;color:#6e6e6e;transform-origin:0 50%;transform:scaleX(1.0859);">215.32</span>
<div class="r" style="left:1905.5px;top:1202.0px;width:14.0px;height:200.0px;background:#e9ebed;"></div>
<div class="r" style="left:1910.2px;top:1205.0px;width:5.8px;height:197.0px;background:#cacaca;border-radius:3px 3px 0 0;"></div>
<div class="r" style="left:1968.5px;top:48.0px;width:26.5px;height:1354.0px;background:#dbe0e7;"></div>
<div class="r" style="left:1968.8px;top:48.0px;width:26.2px;height:573.0px;background:#bfc6d0;border-radius:0 0 0 3px;"></div>
<div class="r" style="left:-20px;top:1290px;width:2015px;height:112px;background:linear-gradient(180deg,rgba(0,0,0,0) 0%,rgba(0,0,0,.035) 37%,rgba(0,0,0,.13) 82%,rgba(0,0,0,.13) 100%)"></div>
<div class="r" style="left:-20.0px;top:1357.8px;width:461.6px;height:4.0px;background:rgba(232,150,150,.42);"></div>
<div class="r" style="left:441.6px;top:1357.8px;width:1553.4px;height:4.0px;background:rgba(255,255,255,.05);"></div>
<div class="r" style="left:1891px;top:1310.5px;width:60px;height:60px;border-radius:50%;background:linear-gradient(180deg,#e75e6d 30%,#db5a68 100%);box-shadow:0 2px 6px rgba(0,0,0,.16)"></div>
<svg style="left:1906.8px;top:1326.8px" width="28" height="26" viewBox="0 0 28 26"><path d="M2.4 2.4 H25.4 V24 L20.6 21.2 H2.4 Z" fill="none" stroke="#fabfc6" stroke-width="2.5" stroke-linejoin="round"/><path d="M14 7.4 L19.6 15 H8.4 Z" fill="#f8b4bc"/></svg>
<div class="r" style="left:1929.0px;top:1380.2px;width:24.0px;height:3.8px;background:#e9ebee;border-radius:2px 2px 0 0;"></div>
</div></div>
</body></html>
